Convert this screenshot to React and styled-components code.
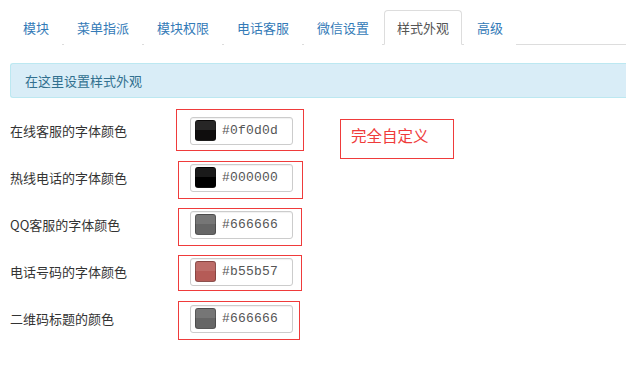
import styled, { createGlobalStyle } from 'styled-components';

const GlobalStyle = createGlobalStyle`
  body {
    margin: 0;
    background: #fff;
    font-family: "Noto Sans CJK SC", "Liberation Sans", sans-serif;
    font-size: 13px;
    color: #333;
    overflow: hidden;
  }
`

const Page = styled.div`
  width: 626px;
  height: 370px;
  padding-top: 10px;
  box-sizing: border-box;
`

const Tabs = styled.ul`
  display: flex;
  list-style: none;
  margin: 0 0 0 10px;
  padding: 0;
  border-bottom: 1px solid #ddd;
`

const Tab = styled.li`
  height: 35px;
  margin-right: 2px;
  margin-bottom: -1px;
  padding: 0 12px;
  display: flex;
  align-items: center;
  border: 1px solid ${p => (p.$active ? '#ddd' : 'transparent')};
  border-bottom-color: ${p => (p.$active ? '#fff' : 'transparent')};
  border-radius: 4px 4px 0 0;
  background: #fff;
  color: ${p => (p.$active ? '#555' : '#337ab7')};
  box-sizing: border-box;
  line-height: 1;
`

const Alert = styled.div`
  margin: 18px 0 0 10px;
  height: 35px;
  padding: 0 14px;
  display: flex;
  align-items: center;
  background: #d9edf7;
  border: 1px solid #bce8f1;
  border-right: none;
  border-radius: 3px 0 0 3px;
  color: #31708f;
  box-sizing: border-box;
`

const Form = styled.div`
  margin-top: 9px;
  display: flex;
  flex-direction: column;
`

const Row = styled.div`
  height: 47px;
  display: flex;
  align-items: center;
  padding-left: 10px;
`

const Label = styled.label`
  width: 180px;
`

const Field = styled.div`
  position: relative;
  width: 103px;
  height: 28px;
  display: flex;
  align-items: center;
  gap: 6px;
  padding-left: 4px;
  border: 1px solid #ccc;
  border-radius: 3px;
  box-shadow: inset 0 1px 1px rgba(0, 0, 0, 0.06);
  box-sizing: border-box;
  background: #fff;
`

const Swatch = styled.span`
  width: 21px;
  height: 21px;
  border-radius: 3px;
  box-sizing: border-box;
  border: 1px solid rgba(0, 0, 0, 0.25);
  background:
    linear-gradient(rgba(255, 255, 255, 0.1) 50%, rgba(0, 0, 0, 0) 50%),
    ${p => p.$color};
`

const Hex = styled.span`
  font-family: "Liberation Mono", "DejaVu Sans Mono", monospace;
  font-size: 13px;
  color: #555;
  letter-spacing: 0.2px;
`

const Mark = styled.span`
  position: absolute;
  top: ${p => p.$t}px;
  bottom: ${p => p.$b}px;
  left: ${p => p.$l}px;
  right: ${p => p.$r}px;
  border: 1px solid #ef3b3b;
  pointer-events: none;
`

const Note = styled.div`
  align-self: flex-start;
  margin: 12px 0 0 47px;
  width: 114px;
  height: 40px;
  padding: 0 0 8px 10px;
  display: flex;
  align-items: center;
  border: 1px solid #ef3b3b;
  box-sizing: border-box;
  color: #ef3b3b;
  font-size: 15.5px;
`

const tabs = ['模块', '菜单指派', '模块权限', '电话客服', '微信设置', '样式外观', '高级'];

const rows = [
  { label: '在线客服的字体颜色', hex: '#0f0d0d', m: [-9, -7, -15, -12] },
  { label: '热线电话的字体颜色', hex: '#000000', m: [-4, -8, -13, -11] },
  { label: 'QQ客服的字体颜色', hex: '#666666', m: [-4, -8, -13, -10] },
  { label: '电话号码的字体颜色', hex: '#b55b57', m: [-4, -6, -13, -10] },
  { label: '二维码标题的颜色', hex: '#666666', m: [-5, -8, -13, -8] },
];

function App() {
  return (
    <Page>
      <GlobalStyle />
      <Tabs>
        {tabs.map(t => (
          <Tab key={t} $active={t === '样式外观'}>{t}</Tab>
        ))}
      </Tabs>
      <Alert>在这里设置样式外观</Alert>
      <Form>
        {rows.map((r, i) => (
          <Row key={i}>
            <Label>{r.label}</Label>
            <Field>
              <Swatch $color={r.hex} />
              <Hex>{r.hex}</Hex>
              <Mark $t={r.m[0]} $b={r.m[1]} $l={r.m[2]} $r={r.m[3]} />
            </Field>
            {i === 0 && <Note>完全自定义</Note>}
          </Row>
        ))}
      </Form>
    </Page>
  );
}

export default App;
